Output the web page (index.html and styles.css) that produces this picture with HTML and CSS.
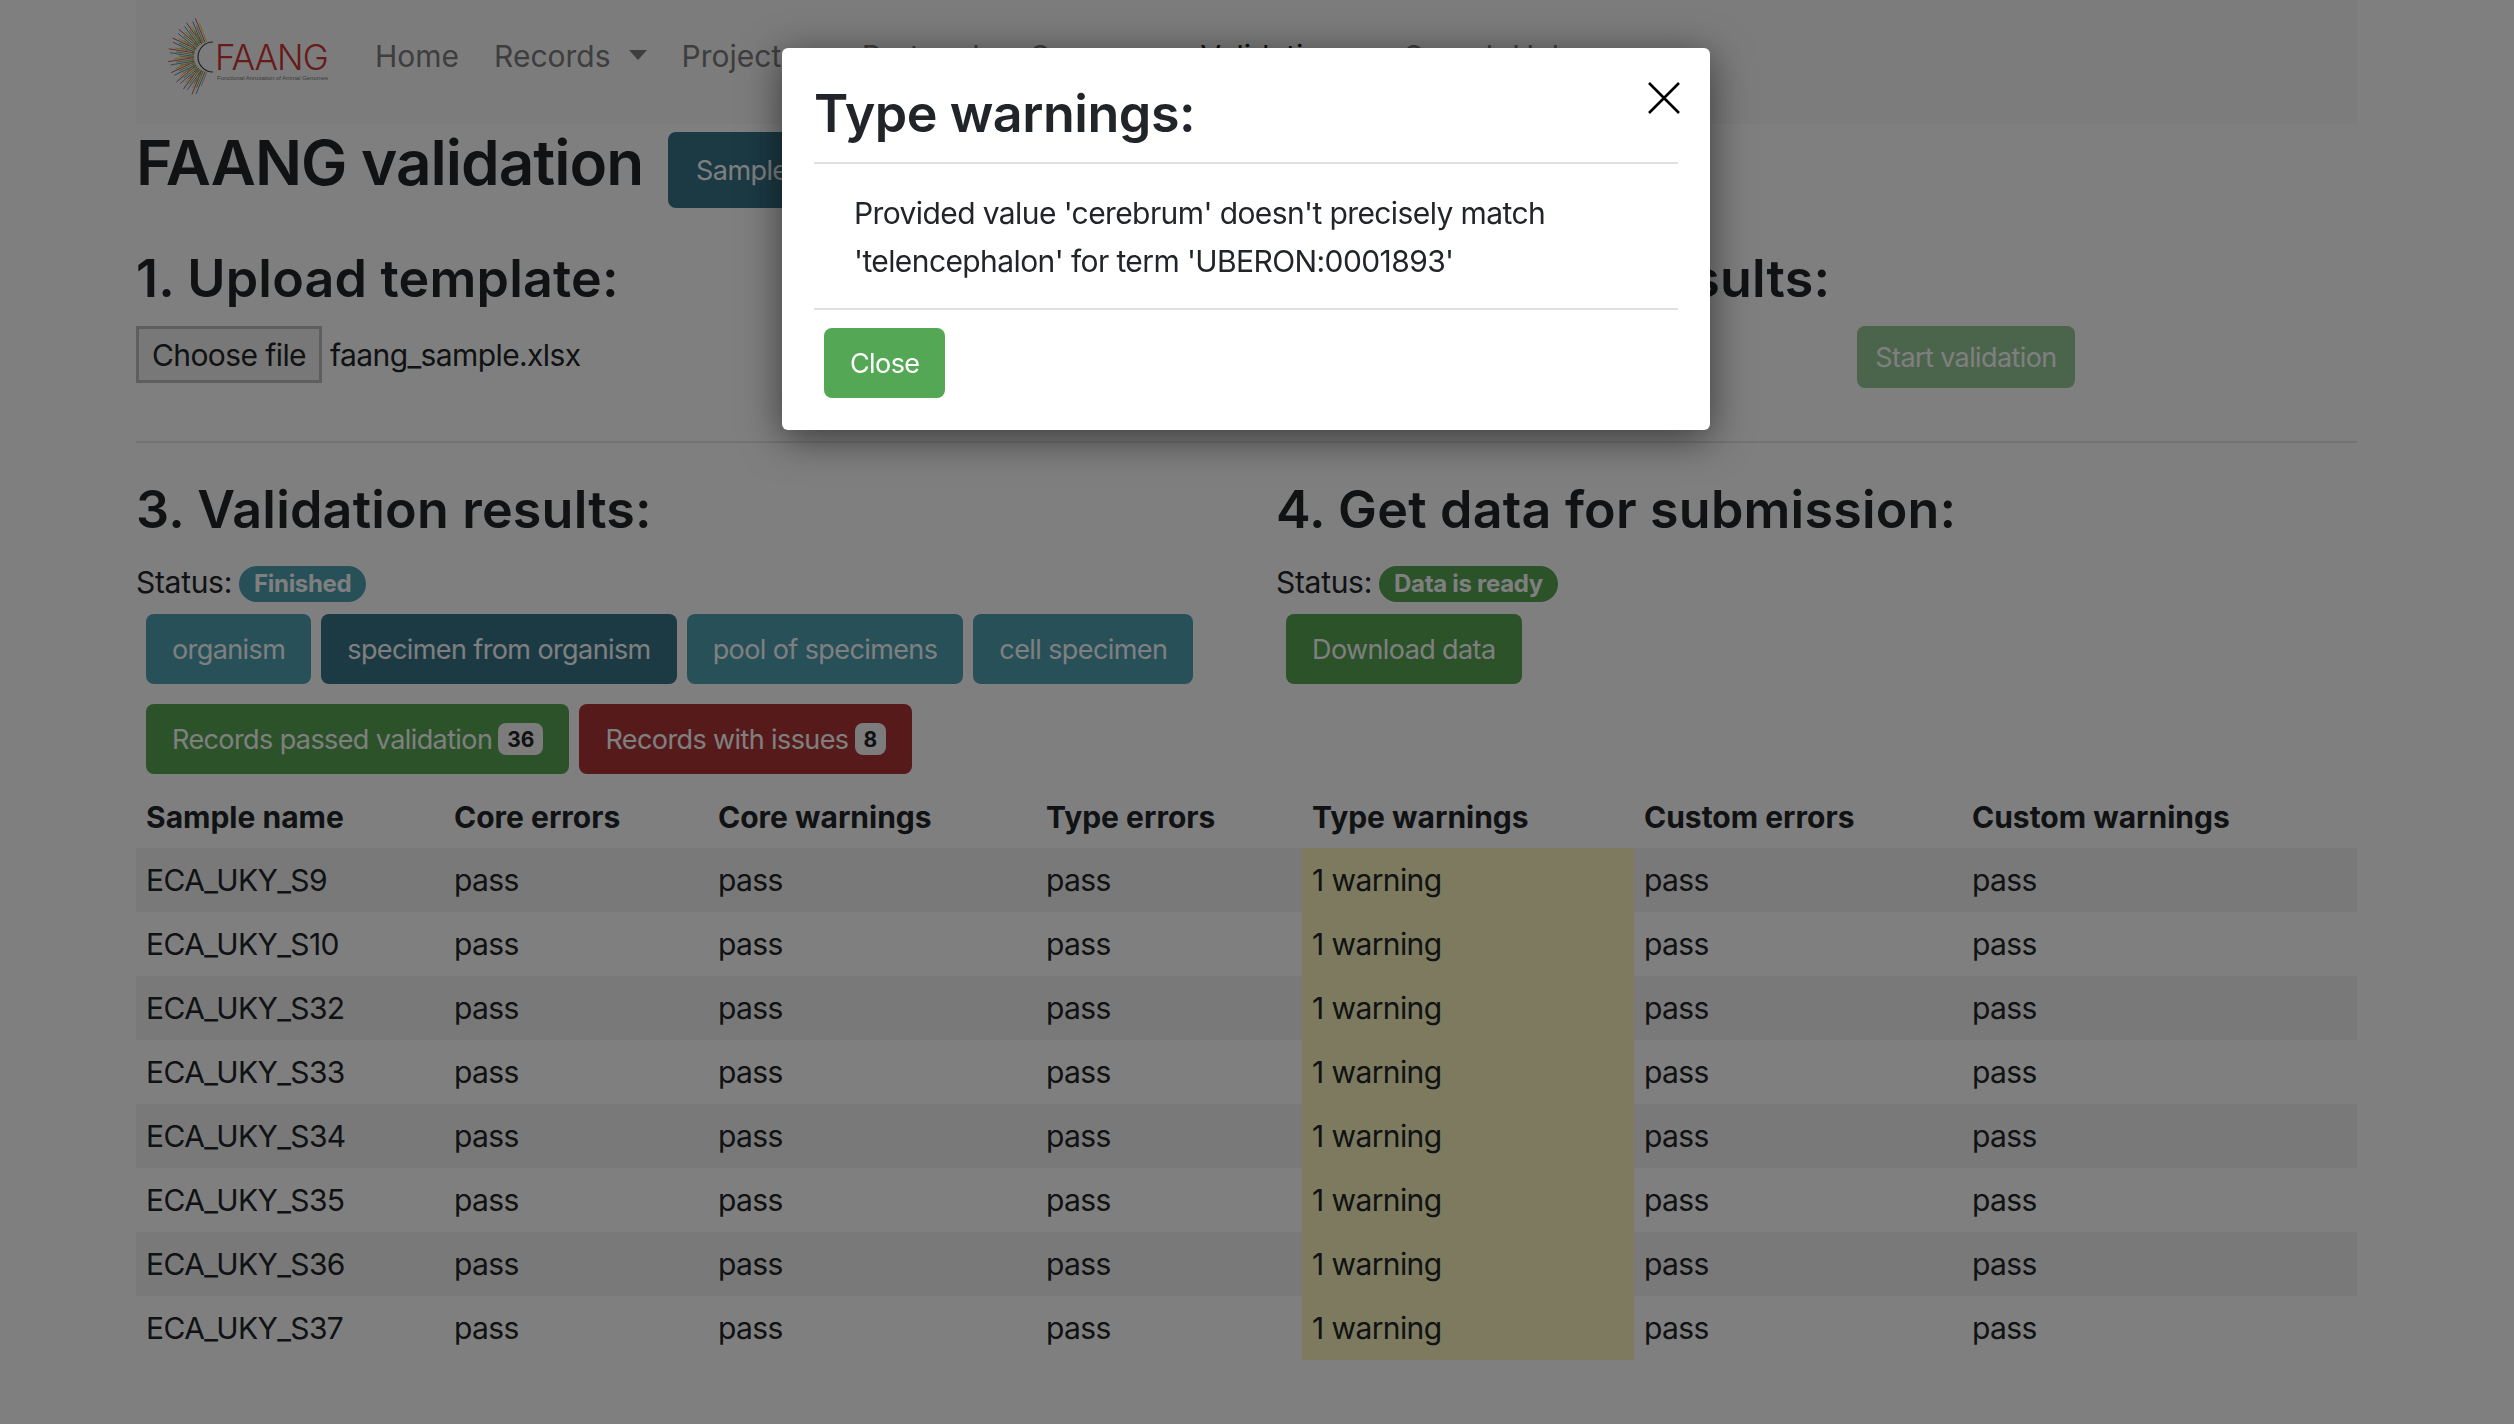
FILE: index.html
```html
<!DOCTYPE html>
<html lang="en">
<head>
<meta charset="utf-8">
<title>FAANG validation</title>
<link rel="stylesheet" href="styles.css">
</head>
<body>
<div class="page">
  <nav class="navbar">
    <svg class="logo" width="170" height="90" viewBox="160 17 170 90" aria-label="FAANG logo">
      <defs>
        <g id="ray">
          <line x1="-15" y1="-3.6" x2="-35" y2="-3.6" stroke="#d9cf4a" stroke-width="0.9"/>
          <line x1="-15" y1="-1.8" x2="-41" y2="-1.8" stroke="#c43a3a" stroke-width="0.8"/>
          <line x1="-15" y1="0" x2="-33" y2="0" stroke="#7fae4a" stroke-width="0.9"/>
          <line x1="-15" y1="1.8" x2="-39" y2="1.8" stroke="#3f7fb0" stroke-width="0.8"/>
          <line x1="-15" y1="3.6" x2="-30" y2="3.6" stroke="#d6a04a" stroke-width="0.9"/>
        </g>
      </defs>
      <g transform="translate(209 57)">
        <use href="#ray" transform="rotate(-68)"/>
        <use href="#ray" transform="rotate(-54)"/>
        <use href="#ray" transform="rotate(-40)"/>
        <use href="#ray" transform="rotate(-25)"/>
        <use href="#ray" transform="rotate(-9)"/>
        <use href="#ray" transform="rotate(9)"/>
        <use href="#ray" transform="rotate(25)"/>
        <use href="#ray" transform="rotate(40)"/>
        <use href="#ray" transform="rotate(54)"/>
        <use href="#ray" transform="rotate(68)"/>
        <path d="M4 -15 A15 15 0 0 0 4 15" fill="none" stroke="#444" stroke-width="1.2"/>
      </g>
      <text x="215" y="70" class="logo-name">FAANG</text>
      <text x="217" y="80" class="logo-sub" textLength="111" lengthAdjust="spacingAndGlyphs">Functional Annotation of Animal Genomes</text>
    </svg>
    <ul class="nav">
      <li class="nav-link">Home</li>
      <li class="nav-link has-caret">Records</li>
      <li class="nav-link">Projects</li>
      <li class="nav-link nav-wide">Protocols</li>
      <li class="nav-link">Summary</li>
      <li class="nav-link active">Validation</li>
      <li class="nav-link nav-wide">Search Help</li>
    </ul>
  </nav>

  <div class="title-row">
    <h1>FAANG validation</h1>
    <button class="btn btn-teal-dark btn-title">Samples</button>
  </div>

  <div class="cols upload-row">
    <section>
      <h2>1. Upload template:</h2>
      <div class="file-row">
        <span class="file-btn">Choose file</span>
        <span>faang_sample.xlsx</span>
      </div>
    </section>
    <section>
      <h2>2. Check your results:</h2>
      <button class="btn btn-start">Start validation</button>
    </section>
  </div>

  <hr class="divider">

  <div class="cols">
    <section>
      <h2>3. Validation results:</h2>
      <div class="status">Status: <span class="pill pill-teal">Finished</span></div>
      <div class="btn-row">
        <button class="btn btn-teal">organism</button>
        <button class="btn btn-teal-dark">specimen from organism</button>
        <button class="btn btn-teal">pool of specimens</button>
        <button class="btn btn-teal">cell specimen</button>
      </div>
      <div class="btn-row btn-row-2">
        <button class="btn btn-green">Records passed validation <span class="count">36</span></button>
        <button class="btn btn-red">Records with issues <span class="count">8</span></button>
      </div>
    </section>
    <section>
      <h2>4. Get data for submission:</h2>
      <div class="status">Status: <span class="pill pill-green">Data is ready</span></div>
      <div class="btn-row">
        <button class="btn btn-green">Download data</button>
      </div>
    </section>
  </div>

  <table class="results">
    <thead>
      <tr>
        <th class="c1">Sample name</th><th class="c2">Core errors</th><th class="c3">Core warnings</th><th class="c4">Type errors</th><th class="c5">Type warnings</th><th class="c6">Custom errors</th><th class="c7">Custom warnings</th>
      </tr>
    </thead>
    <tbody>
      <tr><td>ECA_UKY_S9</td><td>pass</td><td>pass</td><td>pass</td><td class="warn">1 warning</td><td>pass</td><td>pass</td></tr>
      <tr><td>ECA_UKY_S10</td><td>pass</td><td>pass</td><td>pass</td><td class="warn">1 warning</td><td>pass</td><td>pass</td></tr>
      <tr><td>ECA_UKY_S32</td><td>pass</td><td>pass</td><td>pass</td><td class="warn">1 warning</td><td>pass</td><td>pass</td></tr>
      <tr><td>ECA_UKY_S33</td><td>pass</td><td>pass</td><td>pass</td><td class="warn">1 warning</td><td>pass</td><td>pass</td></tr>
      <tr><td>ECA_UKY_S34</td><td>pass</td><td>pass</td><td>pass</td><td class="warn">1 warning</td><td>pass</td><td>pass</td></tr>
      <tr><td>ECA_UKY_S35</td><td>pass</td><td>pass</td><td>pass</td><td class="warn">1 warning</td><td>pass</td><td>pass</td></tr>
      <tr><td>ECA_UKY_S36</td><td>pass</td><td>pass</td><td>pass</td><td class="warn">1 warning</td><td>pass</td><td>pass</td></tr>
      <tr><td>ECA_UKY_S37</td><td>pass</td><td>pass</td><td>pass</td><td class="warn">1 warning</td><td>pass</td><td>pass</td></tr>
    </tbody>
  </table>
</div>

<div class="backdrop"></div>

<div class="modal" role="dialog">
  <header class="modal-head">
    <h2>Type warnings:</h2>
    <svg class="modal-x" width="32" height="32" viewBox="0 0 32 32" aria-label="Close"><path d="M1 1 L31 31 M31 1 L1 31" stroke="#000" stroke-width="2.6" fill="none"/></svg>
  </header>
  <div class="modal-body">
    <p>Provided value 'cerebrum' doesn't precisely match<br>'telencephalon' for term 'UBERON:0001893'</p>
  </div>
  <footer class="modal-foot">
    <button class="btn btn-close">Close</button>
  </footer>
</div>
</body>
</html>
```
FILE: styles.css
```css
* { box-sizing: border-box; }
html, body { margin: 0; height: 1424px; overflow: hidden; }
body {
  background: #fff;
  color: #212529;
  font-family: Inter, "Liberation Sans", sans-serif;
  font-size: 30px;
  line-height: 48px;
  letter-spacing: -0.6px;
}
.page { padding: 0 157px 0 136px; }

.navbar {
  height: 124px;
  background: #f8f9fa;
  display: flex;
  align-items: center;
  padding-left: 24px;
}
.logo { flex: none; display: block; }
.logo-name { font-family: Inter, sans-serif; font-size: 35px; font-weight: 300; fill: #d03434; letter-spacing: -1px; }
.logo-sub { font-family: "Liberation Sans", sans-serif; font-size: 6px; fill: #777; letter-spacing: 0; }
.nav { display: flex; list-style: none; margin: 0 0 0 45px; padding: 0; gap: 35px; letter-spacing: 0; }
.nav-link { color: #7c7c7d; margin-top: -13px; }
.nav-link.active { color: #222; }
.nav-wide { margin-left: 30px; }
.has-caret { display: flex; align-items: center; gap: 18px; }
.has-caret::after {
  content: "";
  border-top: 10px solid #7c7c7d;
  border-left: 9px solid transparent;
  border-right: 9px solid transparent;
  margin-top: -2px;
}

h1, h2 { margin: 0; font-weight: 600; }
h1 { font-size: 62px; line-height: 76px; letter-spacing: -1px; }
h2 { font-size: 52px; line-height: 61px; letter-spacing: 0.2px; }

.title-row { display: flex; align-items: flex-start; gap: 25px; padding-top: 1px; height: 124px; }
.btn-title { margin-top: 7px; }

.cols { display: grid; grid-template-columns: 1140px 1081px; }
.upload-row { height: 193px; }

.btn {
  display: inline-flex;
  align-items: center;
  height: 70px;
  padding: 0 26px;
  border: 0;
  border-radius: 8px;
  color: #fff;
  font-family: inherit;
  font-size: 27px;
  letter-spacing: -0.6px;
  white-space: nowrap;
}
.btn-title { height: 76px; padding: 0 28px; width: 300px; }
.btn-teal { background: #4ea0b2; }
.btn-teal-dark { background: #367488; }
.btn-green { background: #56a452; }
.btn-red { background: #ac3436; }
.btn-close { background: #54a754; height: 70px; padding: 0 26px; }

.file-row { display: flex; align-items: center; gap: 8px; margin-top: 17px; height: 57px; }
.file-btn {
  display: flex;
  align-items: center;
  justify-content: center;
  width: 186px;
  height: 57px;
  background: #f0f0f0;
  border: 3px solid #bcbcbc;
}
.btn-start {
  display: flex;
  height: 62px;
  width: 218px;
  margin: 17px 0 0 581px;
  padding: 0;
  justify-content: center;
  background: #97ca98;
}

.divider { margin: 0 0 36px; border: 0; border-top: 2px solid #e6e6e6; height: 0; }

.status { display: flex; align-items: flex-start; gap: 7px; height: 36px; margin-top: 26px; line-height: 32px; letter-spacing: -0.3px; }
.pill {
  display: flex;
  align-items: center;
  height: 36px;
  padding: 0 15px;
  border-radius: 18px;
  color: #fff;
  font-size: 24px;
  font-weight: 700;
  letter-spacing: -0.3px;
}
.pill-teal { background: #4ea0b2; }
.pill-green { background: #56a452; }

.btn-row { display: flex; gap: 10px; padding-left: 10px; margin-top: 12px; }
.btn-row-2 { margin-top: 20px; }
.count {
  display: flex;
  align-items: center;
  justify-content: center;
  height: 32px;
  padding: 0 9px;
  margin-left: 6px;
  background: #f8f9fa;
  color: #212529;
  border-radius: 8px;
  font-size: 21px;
  font-weight: 700;
  letter-spacing: 0;
}

.results { table-layout: fixed; width: 2221px; border-collapse: collapse; margin-top: 12px; }
.results th, .results td { padding: 0 10px; text-align: left; white-space: nowrap; }
.results th { height: 62px; font-weight: 700; letter-spacing: 0; }
.results td { height: 64px; }
.results tbody tr:nth-child(odd) { background: #f2f2f2; }
.results td.warn { background: #fcf4be; }
.c1 { width: 308px; }
.c2 { width: 264px; }
.c3 { width: 328px; }
.c4 { width: 266px; }
.c5 { width: 332px; }
.c6 { width: 328px; }
.c7 { width: 395px; }

.backdrop { position: fixed; inset: 0; background: rgba(0, 0, 0, 0.5); }

.modal {
  position: absolute;
  left: 782px;
  top: 48px;
  width: 928px;
  height: 382px;
  background: #fff;
  border-radius: 6px;
  box-shadow: 0 8px 40px rgba(0, 0, 0, 0.55);
  padding: 0 32px;
}
.modal-head {
  display: flex;
  justify-content: space-between;
  height: 116px;
  border-bottom: 2px solid #e0e0e0;
  padding-top: 35px;
}
.modal-head h2 { letter-spacing: -0.45px; }
.modal-x { margin: -1px -2px 0 0; flex: none; }
.modal-body { height: 146px; border-bottom: 2px solid #e0e0e0; padding: 25px 40px; }
.modal-body p { margin: 0; }
.modal-foot { padding: 18px 10px; }
```
